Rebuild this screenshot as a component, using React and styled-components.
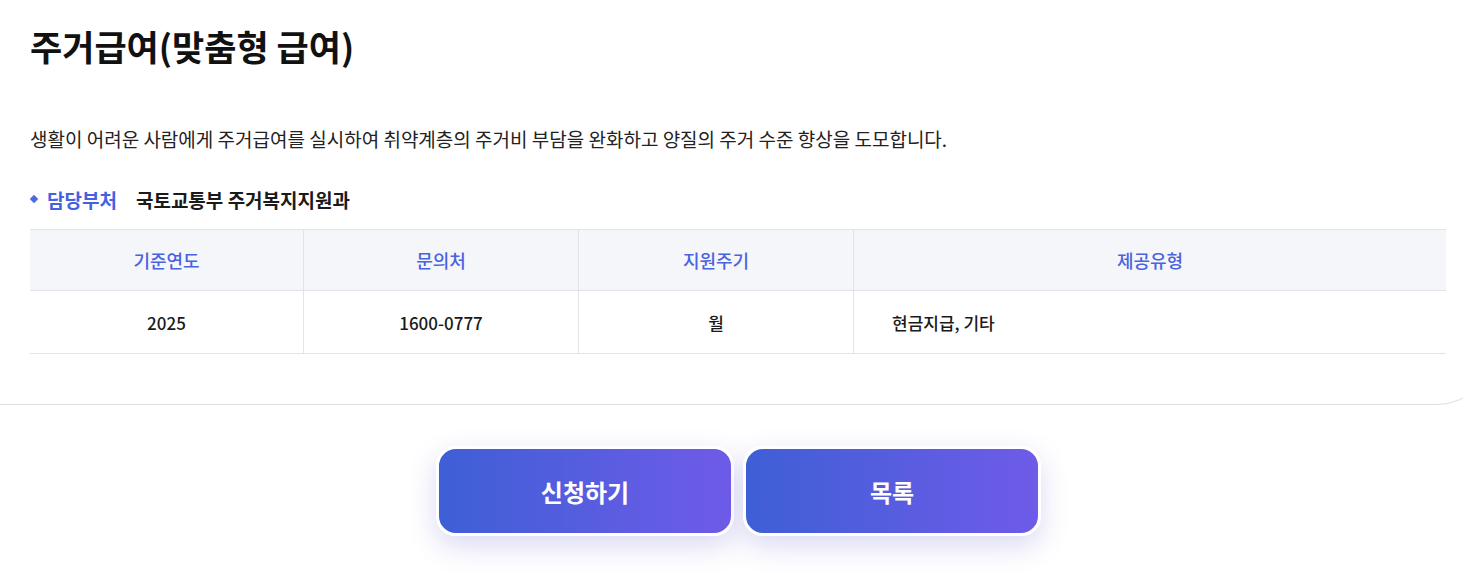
import React from 'react';
import styled, { createGlobalStyle } from 'styled-components';

const GlobalStyle = createGlobalStyle`
    html {
        overflow: hidden;
    }
    html, body {
        margin: 0;
        padding: 0;
        background: #ffffff;
    }
    body {
        font-family: "Noto Sans CJK KR", "Noto Sans", sans-serif;
        color: #111;
    }
`;

const Page = styled.div`
    display: flex;
    flex-direction: column;
    width: 1463px;
    padding-bottom: 60px;
`;

const Card = styled.section`
    margin: -60px -30px 0 -90px;
    padding: 83px 46px 50px 119px;
    border: 1px solid #dedede;
    border-radius: 0 0 56px 56px;
    background: #fff;
`;

const Title = styled.h2`
    margin: 0;
    font-size: 35px;
    font-weight: 700;
    line-height: 44px;
    color: #111;
`;

const Description = styled.p`
    margin: 57px 0 0;
    font-size: 19px;
    line-height: 28px;
    color: #222;
`;

const DeptRow = styled.div`
    display: flex;
    align-items: center;
    margin-top: 33px;
    height: 26px;
    font-size: 19px;
    font-weight: 700;
`;

const Diamond = styled.span`
    width: 6px;
    height: 6px;
    margin: 0 10px 0 1px;
    background: #4a6be0;
    transform: rotate(45deg);
`;

const DeptLabel = styled.span`
    color: #4361e0;
    margin-right: 19px;
`;

const DeptValue = styled.span`
    color: #1a1a1a;
`;

const Table = styled.div`
    display: grid;
    grid-template-columns: 273px 275px 275px 1fr;
    margin-top: 17px;
    border-top: 1px solid #e1e3e8;
`;

const Cell = styled.div`
    display: flex;
    align-items: center;
    justify-content: ${p => (p.$left ? 'flex-start' : 'center')};
    padding-left: ${p => (p.$left ? '38px' : '0')};
    height: ${p => (p.$head ? '60px' : '62px')};
    background: ${p => (p.$head ? '#f5f6fa' : '#fff')};
    color: ${p => (p.$head ? '#4a63e0' : '#1a1a1a')};
    font-size: ${p => (p.$head ? '18px' : '17px')};
    font-weight: 500;
    border-bottom: 1px solid #e1e3e8;
    border-left: ${p => (p.$first ? 'none' : '1px solid #e1e3e8')};
`;

const ButtonRow = styled.div`
    display: flex;
    justify-content: center;
    gap: 9px;
    margin-top: 41px;
    padding-left: 14px;
`;

const ActionButton = styled.button`
    box-sizing: border-box;
    width: 298px;
    height: 90px;
    border: 3px solid #fff;
    border-radius: 20px;
    background: linear-gradient(90deg, #3e5fd6 0%, #6f5be9 100%);
    box-shadow: 0 10px 28px rgba(88, 80, 200, 0.22);
    color: #fff;
    font-family: "Noto Sans CJK KR", "Noto Sans", sans-serif;
    font-size: 24px;
    font-weight: 700;
    cursor: pointer;
`;

const headers = ['기준연도', '문의처', '지원주기', '제공유형'];
const values = ['2025', '1600-0777', '월', '현금지급, 기타'];

export default function App() {
    return (
        <>
            <GlobalStyle />
            <Page>
                <Card>
                    <Title>주거급여(맞춤형 급여)</Title>
                    <Description>
                        생활이 어려운 사람에게 주거급여를 실시하여 취약계층의 주거비 부담을 완화하고 양질의 주거 수준 향상을 도모합니다.
                    </Description>
                    <DeptRow>
                        <Diamond />
                        <DeptLabel>담당부처</DeptLabel>
                        <DeptValue>국토교통부 주거복지지원과</DeptValue>
                    </DeptRow>
                    <Table>
                        {headers.map((h, i) => (
                            <Cell key={h} $head $first={i === 0}>{h}</Cell>
                        ))}
                        {values.map((v, i) => (
                            <Cell key={v} $first={i === 0} $left={i === 3}>{v}</Cell>
                        ))}
                    </Table>
                </Card>
                <ButtonRow>
                    <ActionButton>신청하기</ActionButton>
                    <ActionButton>목록</ActionButton>
                </ButtonRow>
            </Page>
        </>
    );
}
